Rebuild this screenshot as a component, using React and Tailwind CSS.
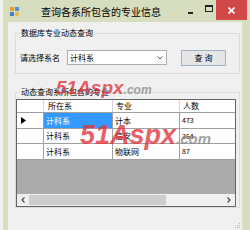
import React from "react";

const rows = [
  { dept: "计科系", major: "计本", count: "473", active: true },
  { dept: "计科系", major: "信安", count: "354" },
  { dept: "计科系", major: "物联网", count: "87" },
];

function TitleBar() {
  return (
    <div className="flex h-[22px] shrink-0 items-start">
      <div className="ml-[7px] mt-[7px] grid h-[9px] w-[9px] grid-cols-2 gap-[1px]">
        <span className="bg-[#e0a030]" />
        <span className="bg-[#5a8fd0]" />
        <span className="bg-[#4a7fc0]" />
        <span className="bg-[#e8c050]" />
      </div>
      <span className="ml-[22px] mt-[6px] text-[10px] leading-[12px] text-black">查询各系所包含的专业信息</span>
      <div className="flex-1" />
      <div className="mt-[12px] h-[2px] w-[5px] bg-[#222]" />
      <div className="ml-[12px] mt-[5px] h-[7px] w-[8px] border border-t-2 border-[#222]" />
      <div className="ml-[3px] mr-[3px] flex h-[20px] w-[31px] items-center justify-center bg-[#d04848]">
        <svg width="7" height="7" viewBox="0 0 7 7">
          <path d="M0.5 0.5 L6.5 6.5 M6.5 0.5 L0.5 6.5" stroke="#fff" strokeWidth="1.6" />
        </svg>
      </div>
    </div>
  );
}

function Grid() {
  return (
    <div className="ml-[1px] mt-[2px] flex h-[108px] w-[220px] flex-col border border-[#646464] bg-[#ababab]">
      <div className="flex h-[13px] shrink-0 border-b border-[#a0a0a0] bg-white leading-[12px]">
        <div className="w-[27px] border-r border-[#d5d5d5]" />
        <div className="w-[69px] border-r border-[#d5d5d5] pl-[4px]">所在系</div>
        <div className="w-[67px] border-r border-[#d5d5d5] pl-[3px]">专业</div>
        <div className="flex-1 pl-[3px]">人数</div>
      </div>
      {rows.map((row, index) => (
        <div
          key={row.major}
          className={`flex shrink-0 border-b border-[#a0a0a0] bg-white ${index === 1 ? "h-[15px]" : "h-[16px]"}`}
        >
          <div className="flex w-[27px] items-center border-r border-[#a0a0a0] pl-[4px]">
            {row.active && (
              <svg width="5" height="7" viewBox="0 0 5 7">
                <path d="M0 0 L5 3.5 L0 7 Z" fill="#000" />
              </svg>
            )}
          </div>
          <div
            className={`flex w-[69px] items-center border-r border-[#a0a0a0] pl-[2px] ${
              row.active ? "bg-[#3399ff] text-white" : ""
            }`}
          >
            {row.dept}
          </div>
          <div className="flex w-[67px] items-center border-r border-[#a0a0a0] pl-[2px]">{row.major}</div>
          <div className="flex flex-1 items-center pl-[2px] text-[7px]">{row.count}</div>
        </div>
      ))}
      <div className="flex-1" />
      <div className="flex h-[12px] shrink-0 bg-[#f0f0f0]">
        <div className="flex w-[12px] items-center justify-center">
          <svg width="4" height="6" viewBox="0 0 4 6">
            <path d="M3.5 0.5 L1 3 L3.5 5.5" stroke="#444" strokeWidth="1.2" fill="none" />
          </svg>
        </div>
        <div className="my-[1px] w-[137px] bg-[#cdcdcd]" />
        <div className="flex-1" />
        <div className="flex w-[12px] items-center justify-center">
          <svg width="4" height="6" viewBox="0 0 4 6">
            <path d="M0.5 0.5 L3 3 L0.5 5.5" stroke="#444" strokeWidth="1.2" fill="none" />
          </svg>
        </div>
      </div>
    </div>
  );
}

export default function App() {
  return (
    <div className="relative flex h-[230px] w-[250px] overflow-hidden bg-[#eef2ea] font-['Noto_Sans_CJK_SC',sans-serif] text-[8px] text-black">
      <div className="w-[3px] shrink-0" />
      <div className="flex flex-1 flex-col bg-[#d7ddbf]">
        <TitleBar />
        <div className="relative mr-[8px] ml-[5px] flex flex-1 flex-col bg-[#f0f0f0]">
          <fieldset className="ml-[7px] mt-[6px] h-[46px] w-[225px] border border-[#dcdcdc] pl-[4px]">
            <legend className="px-[1px] leading-[10px]">数据库专业动态查询</legend>
            <div className="mt-[12px] flex items-start">
              <span className="mt-[3px] leading-[10px]">请选择系名</span>
              <div className="ml-[7px] flex h-[15px] w-[100px] items-center border border-[#abadb3] bg-white pl-[2px]">
                <span className="flex-1 leading-[10px]">计科系</span>
                <svg className="mr-[3px]" width="6" height="4" viewBox="0 0 6 4">
                  <path d="M0.5 0.5 L3 3 L5.5 0.5" stroke="#555" strokeWidth="1" fill="none" />
                </svg>
              </div>
              <div className="ml-[14px] flex h-[16px] w-[45px] items-center justify-center border border-[#9fb3c8] bg-[#e6e6e6] leading-[10px]">
                查 询
              </div>
            </div>
          </fieldset>
          <fieldset className="ml-[7px] mt-[13px] h-[121px] w-[225px] border border-[#dcdcdc] pl-[4px]">
            <legend className="px-[1px] leading-[10px]">动态查询系所包含的专业</legend>
            <div className="-ml-[5px]">
              <Grid />
            </div>
          </fieldset>
          <svg className="absolute bottom-[1px] right-[1px]" width="7" height="7" viewBox="0 0 7 7">
            <rect x="5" y="1" width="1" height="1" fill="#b8b8b8" />
            <rect x="3" y="3" width="1" height="1" fill="#b8b8b8" />
            <rect x="5" y="3" width="1" height="1" fill="#b8b8b8" />
            <rect x="1" y="5" width="1" height="1" fill="#b8b8b8" />
            <rect x="3" y="5" width="1" height="1" fill="#b8b8b8" />
            <rect x="5" y="5" width="1" height="1" fill="#b8b8b8" />
          </svg>
        </div>
      </div>

      {/* 51aspx watermarks laid over the form */}
      <div className="pointer-events-none absolute left-[56px] top-[78px] flex items-baseline font-['Liberation_Sans',sans-serif] italic">
        <span className="text-[19px] font-black leading-[20px] text-[#e2343c]/80">51Aspx</span>
        <span className="text-[12px] font-bold text-[#8a8a8a]/80">.com</span>
      </div>
      <div className="pointer-events-none absolute left-[80px] top-[121px] flex items-baseline font-['Liberation_Sans',sans-serif] italic">
        <span className="text-[27px] font-black leading-[28px] text-[#e2343c]/80">51Aspx</span>
        <span className="text-[15px] font-bold text-[#8a8a8a]/80">.com</span>
      </div>
    </div>
  );
}
